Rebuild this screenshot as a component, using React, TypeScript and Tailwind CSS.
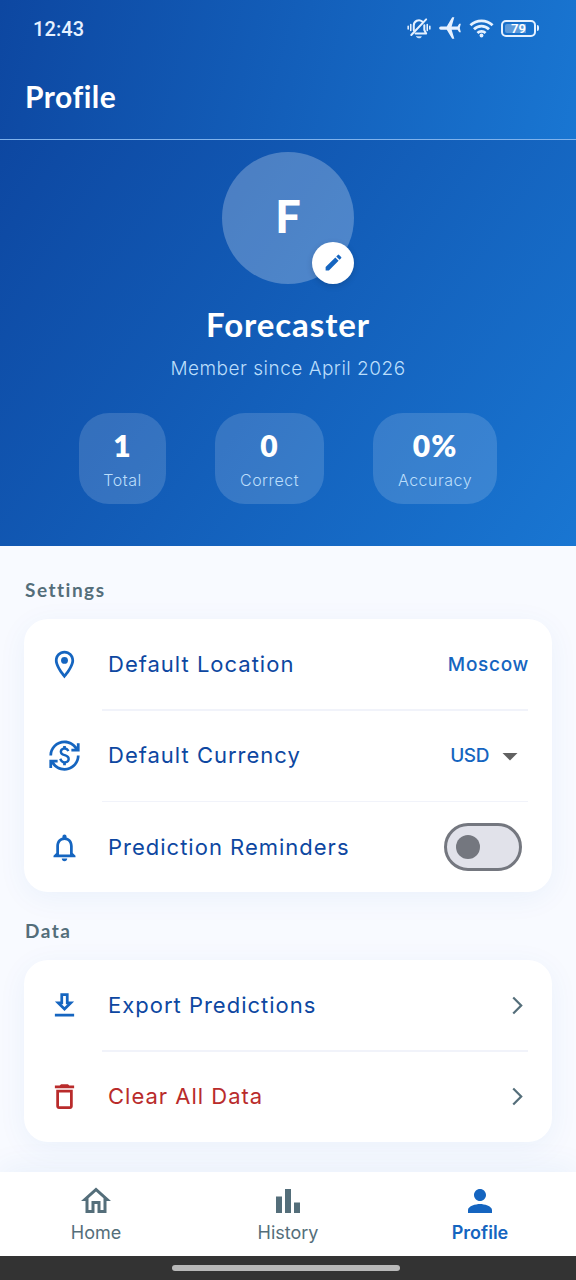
import { useState, type ReactNode } from "react";
import clsx from "clsx";
import type { IconType } from "react-icons";
import {
  MdAirplanemodeActive,
  MdArrowDropDown,
  MdArrowForwardIos,
  MdBarChart,
  MdCurrencyExchange,
  MdDeleteOutline,
  MdEdit,
  MdNotificationsNone,
  MdOutlineGetApp,
  MdOutlineHome,
  MdOutlineLocationOn,
  MdPerson,
} from "react-icons/md";

const stats = [
  { value: "1", label: "Total", width: "w-[87px]" },
  { value: "0", label: "Correct", width: "w-[109px]" },
  { value: "0%", label: "Accuracy", width: "w-[124px]" },
];

function BellOffIcon() {
  return (
    <svg width="24" height="22" viewBox="0 0 26 24" fill="none" stroke="currentColor" strokeWidth="2.2" strokeLinecap="round">
      <path d="M1.2 10v3M4 8.2v6.6M22 8.2v6.6M24.8 10v3" strokeWidth="1.7" />
      <path d="M7.3 14.5V9.2a5.6 5.6 0 0 1 9.2-4.3" />
      <path d="M18.8 9v5.2l2 3.8H9.2" strokeLinejoin="round" />
      <path d="M4.6 19.6 20.8 2.6" />
      <path d="M10.6 21.6h5a2.6 1.6 0 0 1-5 0Z" fill="currentColor" strokeWidth="0.8" />
    </svg>
  );
}

function WifiIcon() {
  return (
    <svg width="25" height="20" viewBox="0 0 26 20" fill="none" stroke="currentColor" strokeWidth="2.9">
      <path d="M1.5 7.2a16.4 16.4 0 0 1 23 0" />
      <path d="M5.2 11.3a11 11 0 0 1 15.6 0" />
      <path d="M8.8 15.2a6 6 0 0 1 8.4 0" />
      <circle cx="13" cy="17.8" r="2" fill="currentColor" stroke="none" />
    </svg>
  );
}

function StatusBar() {
  return (
    <div className="flex h-14 items-center justify-between pr-[37px] pl-[33px] text-[#e6f1ff]">
      <span className="mt-[2px] font-[Roboto,sans-serif] text-[20px] font-medium tracking-[0.1px]">12:43</span>
      <div className="flex items-center">
        <BellOffIcon />
        <MdAirplanemodeActive className="ml-[6px] size-[26px] -rotate-90" />
        <span className="ml-[6px]">
          <WifiIcon />
        </span>
        <div className="ml-[7px] flex items-center gap-px">
          <div className="flex h-[17px] w-[35px] rounded-[5px] border-2 border-current p-[2px]">
            <div className="flex w-full items-center justify-center rounded-[2px] bg-linear-to-r from-white/30 from-79% to-transparent to-79% font-[Roboto,sans-serif] text-[13px] leading-none font-semibold text-white">
              79
            </div>
          </div>
          <div className="h-[6px] w-[2px] rounded-r-sm bg-current" />
        </div>
      </div>
    </div>
  );
}

function StatCard({ value, label, width }: { value: string; label: string; width: string }) {
  return (
    <div className={clsx("flex h-[91.5px] flex-col items-center rounded-[30px] bg-white/15 pt-[13.5px]", width)}>
      <span className="font-[Lato,sans-serif] text-[30px] leading-[38px] font-extrabold tracking-[1px]">{value}</span>
      <span className="mt-[4px] text-[16px] leading-6 font-light tracking-[0.5px] text-[#bbdefb]">{label}</span>
    </div>
  );
}

function SectionTitle({ children }: { children: ReactNode }) {
  return (
    <h2 className="pl-px font-[Lato,sans-serif] text-[19px] leading-[26px] font-bold tracking-[1.5px] text-[#546e7a]">
      {children}
    </h2>
  );
}

function Card({ children }: { children: ReactNode }) {
  return <div className="rounded-3xl bg-white shadow-[0_6px_30px_rgba(21,101,192,0.06)]">{children}</div>;
}

interface RowProps {
  icon: IconType;
  label: string;
  danger?: boolean;
  children: ReactNode;
}

function Row({ icon: Icon, label, danger, children }: RowProps) {
  return (
    <div className={clsx("flex h-[90px] items-center px-6", danger ? "text-[#b92b2b]" : "text-[#0d47a1]")}>
      <Icon className={clsx("size-[33px]", !danger && "text-[#1565c0]")} />
      <span className="ml-[27px] flex-1 text-[22px] tracking-[1px]">{label}</span>
      {children}
    </div>
  );
}

function Divider() {
  return <div className="mr-6 ml-[78px] h-[1.5px] bg-[#f1f3fa]" />;
}

function NavItem({ icon: Icon, label, active }: { icon: IconType; label: string; active?: boolean }) {
  return (
    <button
      className={clsx(
        "flex flex-1 flex-col items-center pt-[11px]",
        active ? "font-semibold text-[#1565c0]" : "text-[#546e7a]"
      )}
    >
      <Icon className="size-9" />
      <span className="text-[18px] leading-[27px]">{label}</span>
    </button>
  );
}

export default function App() {
  const [reminders, setReminders] = useState(false);

  return (
    <div className="flex h-[1280px] w-[576px] flex-col overflow-hidden bg-[#f8faff] font-[Inter,sans-serif]">
      {/* App bar */}
      <header className="h-[140px] border-b border-[#7fb2ec] bg-[linear-gradient(103.6deg,#0d47a1,#1976d2)] text-white">
        <StatusBar />
        <h1 className="mt-5 pl-[25px] font-[Lato,sans-serif] text-[30px] leading-[40px] font-bold tracking-[0.5px]">
          Profile
        </h1>
      </header>

      {/* User summary */}
      <section className="flex h-[406px] flex-col items-center bg-[linear-gradient(125.2deg,#0d47a1,#1976d2)] pt-[11.5px] text-white">
        <div className="relative flex size-[132px] items-center justify-center rounded-full bg-white/25">
          <span className="-mt-[2px] font-[Lato,sans-serif] text-[45px] font-black">F</span>
          <button className="absolute right-0 bottom-0 flex size-[42px] items-center justify-center rounded-full bg-white text-[#1565c0] shadow-[0_2px_6px_rgba(0,0,0,0.15)]">
            <MdEdit className="size-[21px]" />
          </button>
        </div>
        <h2 className="mt-[19.5px] font-[Lato,sans-serif] text-[33px] leading-[42px] font-bold tracking-[0.9px]">
          Forecaster
        </h2>
        <p className="mt-[10px] text-[19px] leading-7 font-light tracking-[0.5px] text-[#bbdefb]">
          Member since April 2026
        </p>
        <div className="mt-[29.5px] flex w-full justify-evenly px-[30px]">
          {stats.map((s) => (
            <StatCard key={s.label} {...s} />
          ))}
        </div>
      </section>

      <main className="flex-1 px-6 pt-[31px]">
        <SectionTitle>Settings</SectionTitle>
        <div className="mt-4">
          <Card>
            <Row icon={MdOutlineLocationOn} label="Default Location">
              <span className="-mr-px pt-[2px] text-[19px] font-medium tracking-[0.7px] text-[#1565c0]">Moscow</span>
            </Row>
            <Divider />
            <Row icon={MdCurrencyExchange} label="Default Currency">
              <span className="mr-[3px] pt-[2px] text-[19px] font-medium tracking-[-0.4px] text-[#1565c0]">USD</span>
              <MdArrowDropDown className="size-9 text-[#616161]" />
            </Row>
            <Divider />
            <Row icon={MdNotificationsNone} label="Prediction Reminders">
              <button
                role="switch"
                aria-checked={reminders}
                onClick={() => setReminders(!reminders)}
                className={clsx(
                  "mr-1.5 flex h-12 w-[78px] items-center rounded-full border-3 border-[#74777f] bg-[#e1e2ea] px-[9px]",
                  reminders && "justify-end"
                )}
              >
                <span className="size-6 rounded-full bg-[#74777f]" />
              </button>
            </Row>
          </Card>
        </div>

        <div className="mt-[26px]">
          <SectionTitle>Data</SectionTitle>
        </div>
        <div className="mt-4">
          <Card>
            <Row icon={MdOutlineGetApp} label="Export Predictions">
              <MdArrowForwardIos className="size-[21px] text-[#546e7a]" />
            </Row>
            <Divider />
            <Row icon={MdDeleteOutline} label="Clear All Data" danger>
              <MdArrowForwardIos className="size-[21px] text-[#546e7a]" />
            </Row>
          </Card>
        </div>
      </main>

      <nav className="flex h-[84px] bg-white shadow-[0_-6px_30px_rgba(21,101,192,0.06)]">
        <NavItem icon={MdOutlineHome} label="Home" />
        <NavItem icon={MdBarChart} label="History" />
        <NavItem icon={MdPerson} label="Profile" active />
      </nav>

      {/* System gesture area */}
      <div className="flex h-6 items-center justify-center bg-[#333333] pr-1">
        <div className="h-[6px] w-[228px] rounded-full bg-[#b8b8b8]" />
      </div>
    </div>
  );
}
